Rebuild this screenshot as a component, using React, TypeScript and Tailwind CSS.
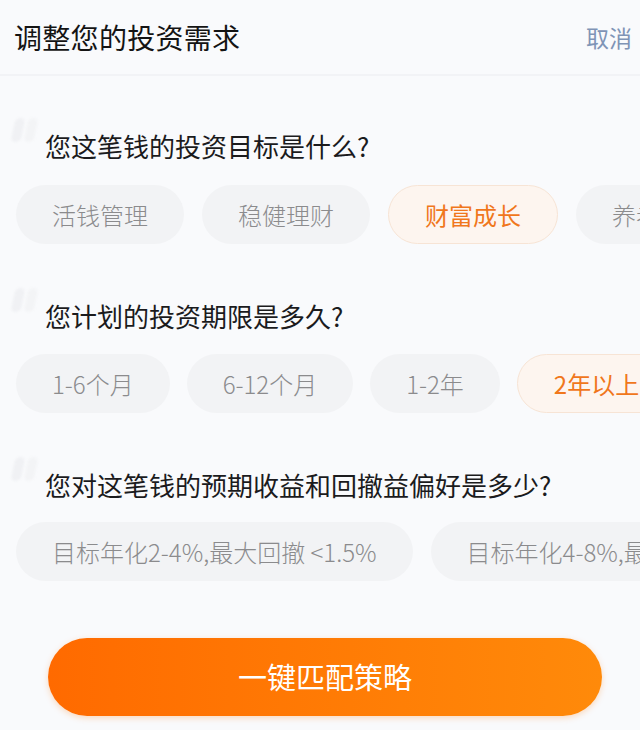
import React from "react";

const font = { fontFamily: '"Noto Sans CJK SC", "Noto Sans", sans-serif' };

type ChipProps = { label: string; active?: boolean };

function Chip({ label, active }: ChipProps) {
  return (
    <div
      className={
        "shrink-0 h-[59px] px-[36px] rounded-full flex items-center text-[24px] whitespace-nowrap " +
        (active
          ? "bg-[#fdf5ef] border border-[#f7e4d5] text-[#f0771c] font-normal"
          : "bg-[#f2f3f5] text-[#8b8b8d] font-light")
      }
    >
      {label}
    </div>
  );
}

function Question({ text }: { text: string }) {
  return (
    <div className="relative h-[36px] pl-[45px] flex items-center">
      <div className="absolute left-[13px] top-[-10px] flex gap-[3px] blur-[1px]">
        <div className="w-[10px] h-[24px] rounded-full bg-[#f0f1f4] -skew-x-12" />
        <div className="w-[10px] h-[24px] rounded-full bg-[#f3f4f6] -skew-x-12" />
      </div>
      <span className="relative text-[26px] text-[#1b1b1d] leading-[36px]">{text}</span>
    </div>
  );
}

export default function App() {
  return (
    <div className="w-[640px] h-[730px] bg-[#f9fafc] overflow-hidden" style={font}>
      <div className="h-[76px] flex items-center justify-between pl-[14px] pr-[8px] border-b-2 border-[#f2f3f6]">
        <span className="text-[28px] text-[#141414] leading-none tracking-[0.3px]">调整您的投资需求</span>
        <span className="text-[23px] text-[#7f94b6] leading-none">取消</span>
      </div>

      <div className="pt-[52px]">
        <Question text="您这笔钱的投资目标是什么?" />
        <div className="mt-[21px] pl-[16px] flex gap-[18px] overflow-hidden">
          <Chip label="活钱管理" />
          <Chip label="稳健理财" />
          <Chip label="财富成长" active />
          <Chip label="养老规划" />
        </div>
      </div>

      <div className="pt-[54px]">
        <Question text="您计划的投资期限是多久?" />
        <div className="mt-[20px] pl-[16px] flex gap-[17px] overflow-hidden">
          <Chip label="1-6个月" />
          <Chip label="6-12个月" />
          <Chip label="1-2年" />
          <Chip label="2年以上" active />
        </div>
      </div>

      <div className="pt-[54px]">
        <Question text="您对这笔钱的预期收益和回撤益偏好是多少?" />
        <div className="mt-[19px] pl-[16px] flex gap-[18px] overflow-hidden">
          <Chip label="目标年化2-4%,最大回撤 <1.5%" />
          <Chip label="目标年化4-8%,最大回撤 <5%" />
        </div>
      </div>

      <div className="pt-[57px] pl-[48px]">
        <button className="w-[554px] h-[78px] rounded-full bg-gradient-to-r from-[#ff6a00] to-[#ff8a0a] text-white text-[29px] flex items-center justify-center shadow-[0_2px_6px_rgba(255,120,0,0.25)]">
          一键匹配策略
        </button>
      </div>
    </div>
  );
}
